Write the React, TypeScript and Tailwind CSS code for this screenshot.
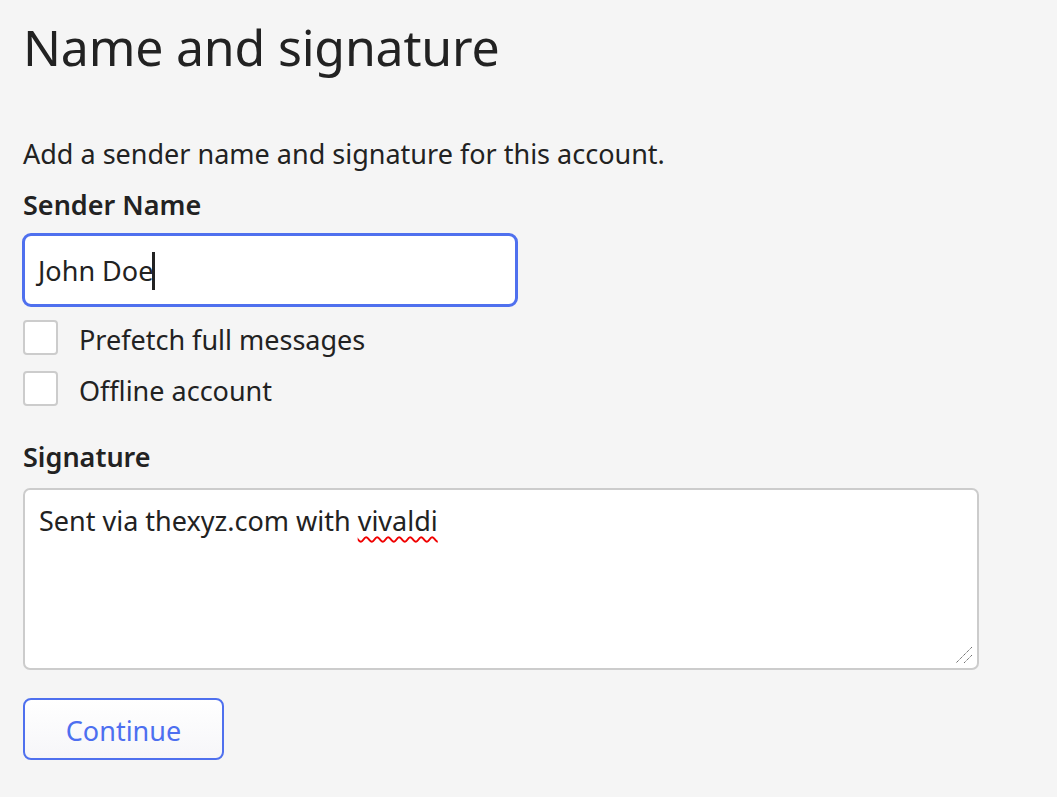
export default function App() {
  const font = { fontFamily: '"Noto Sans", "Open Sans", sans-serif' };
  return (
    <div className="min-h-[797px] w-full bg-[#f5f5f5] text-[#222222]" style={font}>
      <div className="flex flex-col pl-[23px]">
        <h1 className="mt-[17px] h-[60px] text-[50px] leading-[60px] font-normal tracking-[-0.2px]">Name and signature</h1>
        <p className="mt-[59px] h-[36px] text-[27px] leading-[36px]">Add a sender name and signature for this account.</p>
        <div className="mt-[15px] h-[36px] text-[27px] leading-[36px] font-semibold">Sender Name</div>
        <div className="mt-[10px] -ml-[1px] flex h-[74px] w-[496px] items-center rounded-[9px] border-[3px] border-[#4f70ee] bg-white pl-[13px] pt-[2px]">
          <span className="text-[27px] leading-[36px]">John Doe</span>
          <span className="-ml-[1px] inline-block h-[38px] w-[3px] bg-[#222222]" />
        </div>
        <div className="mt-[13px] flex flex-col gap-[16px]">
          <label className="flex h-[35px] items-center">
            <span className="h-[35px] w-[35px] rounded-[4px] border-2 border-[#cccccc] bg-white" />
            <span className="ml-[21px] pt-[4px] text-[27px] leading-[36px]">Prefetch full messages</span>
          </label>
          <label className="flex h-[35px] items-center">
            <span className="h-[35px] w-[35px] rounded-[4px] border-2 border-[#cccccc] bg-white" />
            <span className="ml-[21px] pt-[4px] text-[27px] leading-[36px]">Offline account</span>
          </label>
        </div>
        <div className="mt-[33px] h-[36px] text-[27px] leading-[36px] font-semibold">Signature</div>
        <div className="relative mt-[13px] h-[182px] w-[956px] rounded-[7px] border-2 border-[#cccccc] bg-white pl-[14px] pt-[13px]">
          <span className="text-[27px] leading-[36px]">
            Sent via thexyz.com with{' '}
            <span className="underline decoration-wavy decoration-[#f00000] decoration-[1.5px] underline-offset-[5px]">vivaldi</span>
          </span>
          <svg className="absolute right-[3px] bottom-[3px]" width="20" height="20" viewBox="0 0 20 20">
            <line x1="18" y1="2" x2="2" y2="18" stroke="#555" strokeWidth="1" strokeDasharray="1.2 0.8" />
            <line x1="18" y1="10" x2="10" y2="18" stroke="#555" strokeWidth="1" strokeDasharray="1.2 0.8" />
          </svg>
        </div>
        <button className="mt-[28px] h-[62px] w-[201px] rounded-[8px] border-2 border-[#4f70ee] bg-gradient-to-b from-white to-[#f6f6f9] pt-[3px] text-[27px] leading-[36px] text-[#4d6ff0]">
          Continue
        </button>
      </div>
    </div>
  );
}
